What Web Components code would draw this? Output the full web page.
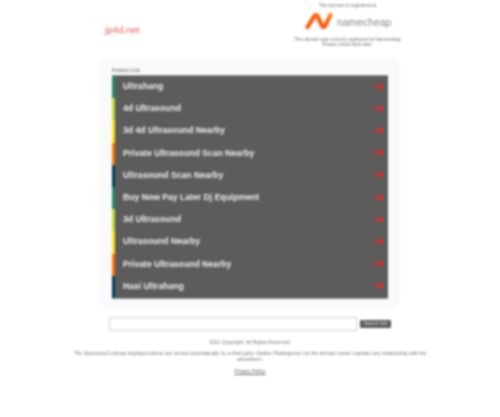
<!DOCTYPE html>
<html lang="en">
<head>
<meta charset="utf-8">
<title>jp4d.net</title>
<style>
  html, body { margin: 0; background: #fff; }
  body { font-family: "Liberation Sans", Arial, sans-serif; overflow: hidden; }
</style>
</head>
<body>
<parked-page>
  <parked-header slot="header" domain="jp4d.net"></parked-header>
  <link-panel title="Related Links">
    <link-row color="#1f8a70">Ultrahang</link-row>
    <link-row color="#bedb39">4d Ultrasound</link-row>
    <link-row color="#ffe11a">3d 4d Ultrasound Nearby</link-row>
    <link-row color="#fd7400">Private Ultrasound Scan Nearby</link-row>
    <link-row color="#004358">Ultrasound Scan Nearby</link-row>
    <link-row color="#1f8a70">Buy Now Pay Later Dj Equipment</link-row>
    <link-row color="#bedb39">3d Ultrasound</link-row>
    <link-row color="#ffe11a">Ultrasound Nearby</link-row>
    <link-row color="#fd7400">Private Ultrasound Nearby</link-row>
    <link-row color="#004358">Hasi Ultrahang</link-row>
  </link-panel>
  <search-bar></search-bar>
  <parked-footer></parked-footer>
</parked-page>

<script>
class ParkedPage extends HTMLElement {
  constructor() {
    super();
    this.attachShadow({ mode: "open" });
    this.shadowRoot.innerHTML = `
    <style>
      :host { display: block; width: 500px; height: 417px; color: #666; }
      .wrap { display: flex; flex-direction: column; align-items: center; height: 100%; filter: blur(0.8px); }
    </style>
    <div class="wrap"><slot name="header"></slot><slot></slot></div>`;
  }
}

class ParkedHeader extends HTMLElement {
  constructor() {
    super();
    this.attachShadow({ mode: "open" });
    this.shadowRoot.innerHTML = `
    <style>
      :host { display: block; width: 300px; height: 57px; }
      .bar { display: flex; justify-content: space-between; padding-left: 5px; height: 100%; }
      .domain { font-size: 9.7px; color: #e8584f; padding-top: 23px; line-height: 13px; }
      .promo { width: 107px; margin-right: -1px; text-align: center; font-size: 4.7px; line-height: 5.5px; color: #777; padding-top: 3px; white-space: nowrap; }
      .promo p { margin: 0; }
      .logo { display: flex; align-items: center; gap: 4px; height: 18px; margin: 3px 0 7px; padding-left: 11px; }
      .logo svg { width: 28px; height: 18px; display: block; flex: none; }
      .logo span { font-size: 10.4px; color: #888; padding-top: 5px; }
    </style>
    <div class="bar">
      <div class="domain"></div>
      <div class="promo">
        <p>This domain is registered at</p>
        <div class="logo">
          <svg viewBox="0 0 28 18">
            <defs>
              <linearGradient id="ng" x1="0" x2="1" y1="1" y2="0">
                <stop offset="0" stop-color="#f36a1e"/>
                <stop offset=".5" stop-color="#ff5a13"/>
                <stop offset="1" stop-color="#f78a26"/>
              </linearGradient>
            </defs>
            <path d="M2.5 15 L9.5 4 Q11 2 12.5 4 L17 14 Q18.5 16 20 14 L25.5 3" fill="none" stroke="url(#ng)" stroke-width="4.4" stroke-linecap="round" stroke-linejoin="round"/>
          </svg>
          <span>namecheap</span>
        </div>
        <p>This domain was recently registered at Namecheap.<br>Please check back later.</p>
      </div>
    </div>`;
    this.shadowRoot.querySelector(".domain").textContent = this.getAttribute("domain");
  }
}

class LinkPanel extends HTMLElement {
  constructor() {
    super();
    this.attachShadow({ mode: "open" });
    this.shadowRoot.innerHTML = `
    <style>
      :host { display: block; width: 276px; padding: 9px 12px 9px; background: #fafafa; border-radius: 8px; }
      .title { font-size: 4.7px; line-height: 9px; color: #666; }
      .list { background: #5a5a5a; border-top: 1px solid #999; border-bottom: 1px solid #999; }
    </style>
    <div class="title"></div>
    <div class="list"><slot></slot></div>`;
    this.shadowRoot.querySelector(".title").textContent = this.getAttribute("title");
  }
}

class LinkRow extends HTMLElement {
  constructor() {
    super();
    this.attachShadow({ mode: "open" });
    this.shadowRoot.innerHTML = `
    <style>
      :host { display: flex; align-items: center; justify-content: space-between; height: 22.2px; box-sizing: border-box; padding: 0 3px 2px 8px; border-left: 3px solid var(--c); background: #5c5c5c; color: #eee; font-size: 8.65px; font-weight: bold; }
      svg { width: 12px; height: 7px; display: block; }
    </style>
    <slot></slot>
    <svg viewBox="0 0 12 7"><path d="M0 3.5H7" stroke="#e0332b" stroke-width="1.4"/><path d="M5.5 0 11.5 3.5 5.5 7Z" fill="#e4262a"/></svg>`;
    this.style.setProperty("--c", this.getAttribute("color"));
  }
}

class SearchBar extends HTMLElement {
  constructor() {
    super();
    this.attachShadow({ mode: "open" });
    this.shadowRoot.innerHTML = `
    <style>
      :host { display: flex; align-items: center; gap: 3px; margin-top: 9px; width: 282px; }
      .field { width: 248px; height: 14px; box-sizing: border-box; border: 1px solid #d4d4d4; background: #fff; }
      .btn { width: 31px; height: 8px; margin-top: 1px; background: #5a5a5a; color: #ddd; font-size: 4.7px; line-height: 8px; text-align: center; border-radius: 1px; white-space: nowrap; }
    </style>
    <div class="field"></div>
    <div class="btn">Search Ads</div>`;
  }
}

class ParkedFooter extends HTMLElement {
  constructor() {
    super();
    this.attachShadow({ mode: "open" });
    this.shadowRoot.innerHTML = `
    <style>
      :host { display: block; width: 360px; margin-top: 8px; text-align: center; font-size: 5px; line-height: 6px; color: #777; }
      p { margin: 0 0 5.5px; }
      a { color: #666; text-decoration: underline; }
    </style>
    <p>2021 Copyright. All Rights Reserved.</p>
    <p>The Sponsored Listings displayed above are served automatically by a third party. Neither Parkingcrew nor the domain owner maintain any relationship with the advertisers.</p>
    <p><a>Privacy Policy</a></p>`;
  }
}

customElements.define("parked-page", ParkedPage);
customElements.define("parked-header", ParkedHeader);
customElements.define("link-panel", LinkPanel);
customElements.define("link-row", LinkRow);
customElements.define("search-bar", SearchBar);
customElements.define("parked-footer", ParkedFooter);
</script>
</body>
</html>
